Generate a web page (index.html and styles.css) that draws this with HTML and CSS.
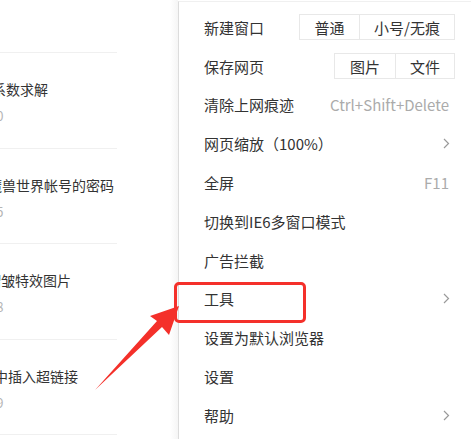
FILE: index.html
```html
<!DOCTYPE html>
<html lang="zh-CN">
<head>
    <meta charset="UTF-8">
    <title>浏览器菜单</title>
    <link rel="stylesheet" href="styles.css">
</head>
<body>
    <div class="page">
        <div class="articles">
            <div class="article-top"></div>
            <div class="article">
                <p class="title t1">程系数求解</p>
                <p class="meta">阅读 120</p>
            </div>
            <div class="article">
                <p class="title t2">魔兽世界帐号的密码</p>
                <p class="meta">阅读 335</p>
            </div>
            <div class="article">
                <p class="title t3">褶皱特效图片</p>
                <p class="meta">阅读 218</p>
            </div>
            <div class="article">
                <p class="title t4">中插入超链接</p>
                <p class="meta">阅读 409</p>
            </div>
        </div>

        <div class="menu">
            <div class="row">
                <span class="label">新建窗口</span>
                <div class="btn-group">
                    <span class="btn w59">普通</span>
                    <span class="btn w96">小号/无痕</span>
                </div>
            </div>
            <div class="row">
                <span class="label">保存网页</span>
                <div class="btn-group">
                    <span class="btn w60">图片</span>
                    <span class="btn w59">文件</span>
                </div>
            </div>
            <div class="row">
                <span class="label">清除上网痕迹</span>
                <span class="hint">Ctrl+Shift+Delete</span>
            </div>
            <div class="row">
                <span class="label">网页缩放（100%）</span>
                <svg class="chev" width="7" height="11" viewBox="0 0 7 11"><path d="M1 1l4.5 4.5L1 10" fill="none" stroke="#9a9a9a" stroke-width="1.2"/></svg>
            </div>
            <div class="row">
                <span class="label">全屏</span>
                <span class="hint">F11</span>
            </div>
            <div class="row">
                <span class="label">切换到IE6多窗口模式</span>
            </div>
            <div class="row">
                <span class="label">广告拦截</span>
            </div>
            <div class="row">
                <span class="label">工具</span>
                <svg class="chev" width="7" height="11" viewBox="0 0 7 11"><path d="M1 1l4.5 4.5L1 10" fill="none" stroke="#9a9a9a" stroke-width="1.2"/></svg>
            </div>
            <div class="row">
                <span class="label">设置为默认浏览器</span>
            </div>
            <div class="row">
                <span class="label">设置</span>
            </div>
            <div class="row">
                <span class="label">帮助</span>
                <svg class="chev" width="7" height="11" viewBox="0 0 7 11"><path d="M1 1l4.5 4.5L1 10" fill="none" stroke="#9a9a9a" stroke-width="1.2"/></svg>
            </div>
        </div>
    </div>

    <!-- annotation overlay -->
    <div class="highlight"></div>
    <svg class="arrow" width="471" height="439" viewBox="0 0 471 439">
        <polygon points="95,390 157,321 150,316 179,306 169,335 162,327" fill="#f4302a"/>
    </svg>
</body>
</html>
```

FILE: styles.css
```css
* {
    box-sizing: border-box;
}

body {
    margin: 0;
    width: 471px;
    height: 439px;
    overflow: hidden;
    background: #fff;
    font-family: "Noto Sans CJK SC", "Liberation Sans", sans-serif;
    color: #333;
    position: relative;
}

.page {
    display: flex;
    height: 100%;
}

.articles {
    width: 178px;
    flex: none;
    overflow: hidden;
    background: linear-gradient(to right, #fff 170px, #f5f5f5 178px);
}

.article-top {
    height: 53px;
    width: 117px;
    border-bottom: 1px solid #f0f0f0;
}

.article {
    width: 117px;
    height: 95.5px;
    border-bottom: 1px solid #f0f0f0;
    padding-top: 26px;
    white-space: nowrap;
}

.title {
    margin: 0;
    font-size: 14px;
    line-height: 20px;
    color: #333;
}

.t1 { margin-left: -22px; }
.t2 { margin-left: -12px; }
.t3 { margin-left: -13px; }
.t4 { margin-left: -6px; }

.meta {
    margin: 8px 0 0 -47px;
    font-size: 13px;
    line-height: 18px;
    color: #b5b5b5;
}

.menu {
    flex: 1;
    margin-top: 1px;
    border-top: 1px solid #f0f0f0;
    border-left: 1px solid #dcdcdc;
    padding-top: 6px;
    background: #fff;
}

.row {
    height: 38.8px;
    display: flex;
    align-items: center;
    justify-content: space-between;
    padding: 0 16px 0 25px;
    font-size: 15px;
    white-space: nowrap;
}

.label {
    color: #333;
}

.hint {
    color: #ababab;
    margin-right: 6px;
}

.chev {
    margin-right: 5px;
}

.btn-group {
    display: flex;
    height: 26px;
    border: 1px solid #e8e8e8;
}

.btn {
    display: flex;
    align-items: center;
    justify-content: center;
    height: 100%;
    color: #333;
}

.btn + .btn {
    border-left: 1px solid #e8e8e8;
}

.w59 { width: 59px; }
.w60 { width: 60px; }
.w96 { width: 95px; }

.highlight {
    position: absolute;
    left: 174px;
    top: 282px;
    width: 132px;
    height: 41px;
    border: 3px solid #f4302a;
    border-radius: 5px;
}

.arrow {
    position: absolute;
    left: 0;
    top: 0;
}
```
